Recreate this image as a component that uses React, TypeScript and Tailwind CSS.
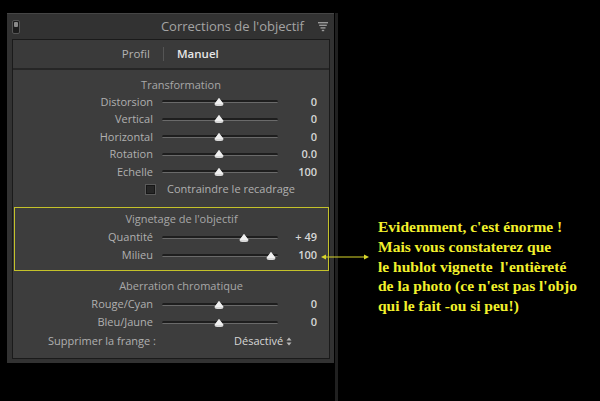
import React from "react";

type Row = { label: string; value: string; pos: number };

const transform: Row[] = [
  { label: "Distorsion", value: "0", pos: 49 },
  { label: "Vertical", value: "0", pos: 49 },
  { label: "Horizontal", value: "0", pos: 49 },
  { label: "Rotation", value: "0.0", pos: 49 },
  { label: "Echelle", value: "100", pos: 49 },
];

const vignette: Row[] = [
  { label: "Quantité", value: "+ 49", pos: 71 },
  { label: "Milieu", value: "100", pos: 94 },
];

const aberration: Row[] = [
  { label: "Rouge/Cyan", value: "0", pos: 49 },
  { label: "Bleu/Jaune", value: "0", pos: 49 },
];

function Slider({ pos }: { pos: number }) {
  return (
    <div className="relative w-[116px] h-[10px] flex items-center">
      <div className="w-full h-[3px] rounded-full bg-[#1e1e1e] border-b border-[#6a6a6a]" />
      {/* thumb */}
      <svg
        className="absolute top-[1px]"
        style={{ left: `calc(${pos}% - 5px)` }}
        width="10"
        height="8"
        viewBox="0 0 10 8"
      >
        <path d="M5 0 L9.5 6 Q9.5 8 7 8 L3 8 Q0.5 8 0.5 6 Z" fill="#d8d8d8" />
        <path d="M5 0 L9.5 6 L0.5 6 Z" fill="#f0f0f0" />
      </svg>
    </div>
  );
}

function SliderRow({ row, labelW }: { row: Row; labelW: string }) {
  return (
    <div className="flex items-center h-[17.5px]">
      <div className={`${labelW} text-right text-[11px] text-[#b0b0b0] pr-[9px]`}>{row.label}</div>
      <Slider pos={row.pos} />
      <div className="w-[39px] text-right text-[11px] font-semibold text-[#d6d6d6]">{row.value}</div>
    </div>
  );
}

function SectionTitle({ children }: { children: React.ReactNode }) {
  return (
    <div className="h-[16px] flex items-center justify-center text-[11px] text-[#a8a8a8] pl-[20px]">
      {children}
    </div>
  );
}

export default function App() {
  return (
    <div
      className="w-[600px] h-[401px] bg-black flex pt-[13px] pl-[7px] relative overflow-hidden"
      style={{ fontFamily: '"Open Sans", "DejaVu Sans", sans-serif' }}
    >
      {/* panel */}
      <div className="w-[327px] h-[350px] bg-[#323232] border-t border-[#454545] flex flex-col shrink-0">
        {/* header */}
        <div className="h-[25px] flex items-center pl-[5px] pr-[5px]">
          <div className="w-[8px] h-[14px] rounded-[2px] bg-[#1c1c1c] border border-[#555] flex flex-col p-[1px]">
            <div className="h-[5px] bg-[#8a8a8a] rounded-[1px]" />
          </div>
          <div className="flex-1 text-right text-[13px] text-[#a4a4a4] pr-[14px]">
            Corrections de l'objectif
          </div>
          <svg width="10" height="10" viewBox="0 0 10 10" className="mr-[1px]">
            <rect x="0" y="0" width="10" height="1.4" fill="#9a9a9a" />
            <rect x="1.2" y="2.6" width="7.6" height="1.4" fill="#9a9a9a" />
            <rect x="2.5" y="5.2" width="5" height="1.4" fill="#9a9a9a" />
            <rect x="3.8" y="7.8" width="2.4" height="1.4" fill="#9a9a9a" />
          </svg>
        </div>
        {/* inner box */}
        <div className="ml-[5px] mr-[4px] h-[320px] border border-[#1a1a1a] flex flex-col">
          {/* tabs */}
          <div className="h-[30px] bg-[#3a3a3a] border-b-2 border-[#262626] flex items-center text-[11.5px]">
            <div className="w-[137px] text-right text-[#b2b2b2]">Profil</div>
            <div className="w-[1px] h-[14px] bg-[#555] mx-[13px]" />
            <div className="font-semibold text-[#e6e6e6]">Manuel</div>
          </div>
          {/* content */}
          <div className="flex-1 bg-[#3d3d3d] flex flex-col pt-[7px]">
            <SectionTitle>Transformation</SectionTitle>
            {transform.map((r) => (
              <SliderRow key={r.label} row={r} labelW="w-[149px]" />
            ))}
            <div className="flex items-center h-[18px]">
              <div className="w-[133px]" />
              <div className="w-[9px] h-[9px] bg-[#262626] border border-[#171717] outline outline-1 outline-[#5a5a5a]" />
              <div className="ml-[12px] text-[11px] text-[#b0b0b0]">Contraindre le recadrage</div>
            </div>
            {/* vignetting (highlighted) */}
            <div className="mt-[8px] ml-[1px] h-[64px] border border-[#c4c22a] flex flex-col pt-[3px]">
              <div className="h-[18px] flex items-center justify-center text-[11px] text-[#a8a8a8] pl-[20px]">
                Vignetage de l'objectif
              </div>
              {vignette.map((r) => (
                <div key={r.label} className="h-[18px] flex flex-col justify-center">
                  <SliderRow row={r} labelW="w-[147px]" />
                </div>
              ))}
            </div>
            <div className="mt-[7px] h-[18px] flex items-center justify-center text-[11px] text-[#a8a8a8] pl-[20px]">
              Aberration chromatique
            </div>
            {aberration.map((r) => (
              <div key={r.label} className="h-[18px] flex flex-col justify-center">
                <SliderRow row={r} labelW="w-[149px]" />
              </div>
            ))}
            <div className="h-[20px] flex items-center text-[11px]">
              <div className="w-[145px] text-right text-[#b0b0b0] pr-[2px]">Supprimer la frange :</div>
              <div className="ml-[76px] text-[#d6d6d6] flex items-center gap-[3px]">
                Désactivé
                <svg width="6" height="9" viewBox="0 0 6 9">
                  <path d="M3 0.5 L5.5 3.5 L0.5 3.5 Z" fill="#b8b8b8" />
                  <path d="M3 8.5 L5.5 5.5 L0.5 5.5 Z" fill="#b8b8b8" />
                </svg>
              </div>
            </div>
          </div>
        </div>
      </div>
      {/* scroll edge */}
      <div className="ml-[1px] w-[3px] self-stretch bg-[#202020] mb-[-20px]" />
      {/* annotation */}
      <div
        className="ml-[40px] pt-[204px] text-[15.5px] font-bold leading-[19.75px] text-[#f2f02c] whitespace-pre"
        style={{ fontFamily: '"Liberation Serif", "Times New Roman", serif' }}
      >
        <div>Evidemment, c'est énorme !</div>
        <div>Mais vous constaterez que</div>
        <div>le hublot vignette  l'entièreté</div>
        <div>de la photo (ce n'est pas l'objo</div>
        <div>qui le fait -ou si peu!)</div>
      </div>
      {/* arrow */}
      <svg className="absolute left-[320px] top-[252px]" width="50" height="10" viewBox="0 0 50 10">
        <line x1="3" y1="5" x2="47" y2="5" stroke="#d8d62a" strokeWidth="1" />
        <path d="M1 5 L6 2.5 L6 7.5 Z" fill="#d8d62a" />
        <path d="M49 5 L44 2.5 L44 7.5 Z" fill="#d8d62a" />
      </svg>
    </div>
  );
}
